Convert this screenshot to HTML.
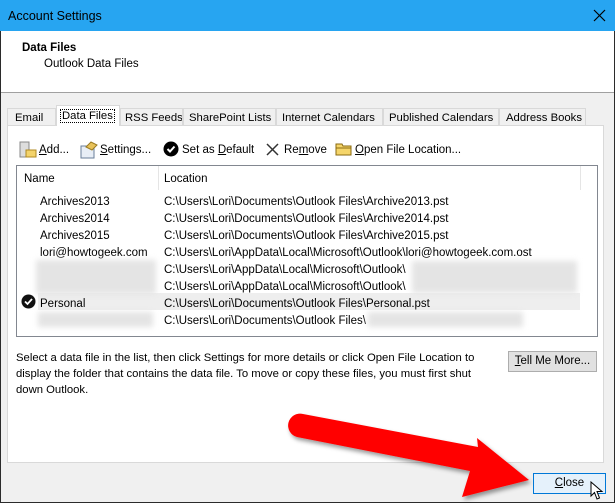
<!DOCTYPE html>
<html><head><style>
*{margin:0;padding:0;box-sizing:border-box}
body{width:615px;height:503px;overflow:hidden;font-family:"Liberation Sans",sans-serif;font-size:11.5px;color:#000;background:#f0f0f0;position:relative}
.a{position:absolute;white-space:nowrap}
u{text-decoration:underline}
.t{overflow:hidden;font-size:11.3px}
</style></head><body>
<div class="a" style="left:0;top:0;width:615px;height:503px;border:1px solid #2b2b2b;border-top:none"></div>
<div class="a" style="left:0;top:0;width:615px;height:31px;background:#27a5f1"></div>
<div class="a" style="left:8px;top:9px;font-size:12.5px">Account Settings</div>
<svg class="a" style="left:593px;top:9px" width="13" height="13"><path d="M1 1L12 12M12 1L1 12" stroke="#000" stroke-width="1.2"/></svg>
<div class="a" style="left:1px;top:31px;width:613px;height:62px;background:#fff;border-bottom:1px solid #a0a0a0"></div>
<div class="a" style="left:22px;top:42px;font-weight:bold">Data Files</div>
<div class="a" style="left:44px;top:58px">Outlook Data Files</div>
<div class="a" style="left:7px;top:125px;width:597px;height:338px;background:#fff;border:1px solid #d9d9d9"></div>
<div class="a t" style="left:7px;top:108px;width:49px;height:18px;border:1px solid #d9d9d9;background:#f0f0f0;padding:3px 0 0 7px">Email</div>
<div class="a t" style="left:56px;top:105px;width:64px;height:21px;border:1px solid #d9d9d9;border-bottom:none;background:#fff;padding:4px 0 0 4px"><span style="outline:1px dotted #000;padding:0 1px">Data Files</span></div>
<div class="a t" style="left:120px;top:108px;width:63px;height:18px;border:1px solid #d9d9d9;background:#f0f0f0;padding:3px 0 0 4px">RSS Feeds</div>
<div class="a t" style="left:183px;top:108px;width:93px;height:18px;border:1px solid #d9d9d9;background:#f0f0f0;padding:3px 0 0 5px">SharePoint Lists</div>
<div class="a t" style="left:276px;top:108px;width:107px;height:18px;border:1px solid #d9d9d9;background:#f0f0f0;padding:3px 0 0 5px">Internet Calendars</div>
<div class="a t" style="left:383px;top:108px;width:116px;height:18px;border:1px solid #d9d9d9;background:#f0f0f0;padding:3px 0 0 5px">Published Calendars</div>
<div class="a t" style="left:499px;top:108px;width:87px;height:18px;border:1px solid #d9d9d9;background:#f0f0f0;padding:3px 0 0 6px">Address Books</div>
<svg class="a" style="left:19px;top:141px" width="18" height="18"><rect x="1" y="1" width="9" height="15" fill="#ddd" stroke="#888"/><rect x="7" y="9" width="10" height="7" fill="#f3d36b" stroke="#b08a20"/></svg>
<div class="a" style="left:39px;top:144px"><u>A</u>dd...</div>
<svg class="a" style="left:80px;top:141px" width="18" height="18"><rect x="1" y="5" width="13" height="12" fill="#e8eef6" stroke="#6a7f9a"/><path d="M6 6L11 1L17 4L12 9Z" fill="#e8c25a" stroke="#9a7a20"/></svg>
<div class="a" style="left:100px;top:144px"><u>S</u>ettings...</div>
<svg class="a" style="left:163px;top:141px" width="16" height="16"><circle cx="8" cy="8" r="7.5" fill="#000"/><path d="M4.5 8L7 10.5L11.5 5.5" stroke="#fff" stroke-width="2" fill="none"/></svg>
<div class="a" style="left:182px;top:144px">Set as <u>D</u>efault</div>
<svg class="a" style="left:266px;top:143px" width="13" height="13"><path d="M1 1L12 12M12 1L1 12" stroke="#333" stroke-width="1.5"/></svg>
<div class="a" style="left:284px;top:144px">Re<u>m</u>ove</div>
<svg class="a" style="left:335px;top:142px" width="18" height="14"><path d="M1 2H7L8 4H16V13H1Z" fill="#f5d56a" stroke="#8a6a10"/><path d="M1 6H16" stroke="#8a6a10"/></svg>
<div class="a" style="left:355px;top:144px"><u>O</u>pen File Location...</div>
<div class="a" style="left:16px;top:165px;width:582px;height:172px;border:1px solid #828790;background:#fff"></div>
<div class="a" style="left:158px;top:166px;width:1px;height:24px;background:#e5e5e5"></div>
<div class="a" style="left:580px;top:166px;width:1px;height:24px;background:#e5e5e5"></div>
<div class="a" style="left:24px;top:173px">Name</div>
<div class="a" style="left:164px;top:173px">Location</div>
<div class="a" style="left:38px;top:293px;width:542px;height:17px;background:#eeeeee"></div>
<svg class="a" style="left:21px;top:294px" width="15" height="15"><circle cx="7.5" cy="7.5" r="7" fill="#111"/><path d="M4 7.5L6.5 10L11 5" stroke="#fff" stroke-width="1.8" fill="none"/></svg>
<div class="a" style="left:40px;top:194px;line-height:17px">Archives2013<br>Archives2014<br>Archives2015<br>lori@howtogeek.com<br>&nbsp;<br>&nbsp;<br>Personal</div>
<div class="a" style="left:164px;top:194px;line-height:17px;font-size:11.5px">C:\Users\Lori\Documents\Outlook Files\Archive2013.pst<br>C:\Users\Lori\Documents\Outlook Files\Archive2014.pst<br>C:\Users\Lori\Documents\Outlook Files\Archive2015.pst<br>C:\Users\Lori\AppData\Local\Microsoft\Outlook\lori@howtogeek.com.ost<br>C:\Users\Lori\AppData\Local\Microsoft\Outlook\<br>C:\Users\Lori\AppData\Local\Microsoft\Outlook\<br>C:\Users\Lori\Documents\Outlook Files\Personal.pst<br>C:\Users\Lori\Documents\Outlook Files\</div>
<div class="a" style="left:36px;top:260px;width:120px;height:34px;background:#e4e4e4;filter:blur(3px)"></div>
<div class="a" style="left:38px;top:312px;width:115px;height:15px;background:#e4e4e4;filter:blur(3px)"></div>
<div class="a" style="left:412px;top:261px;width:165px;height:32px;background:#e4e4e4;filter:blur(3px)"></div>
<div class="a" style="left:368px;top:312px;width:155px;height:15px;background:#e4e4e4;filter:blur(3px)"></div>
<div class="a" style="left:16px;top:350px;line-height:16px;font-size:11.3px">Select a data file in the list, then click Settings for more details or click Open File Location to<br>display the folder that contains the data file. To move or copy these files, you must first shut<br>down Outlook.</div>
<div class="a" style="left:508px;top:351px;width:89px;height:21px;border:1px solid #adadad;background:#e1e1e1;text-align:center;line-height:19px"><u>T</u>ell Me More...</div>
<div class="a" style="left:533px;top:473px;width:73px;height:21px;border:1px solid #0078d7;background:#e5f1fb;text-align:center;line-height:19px"><u>C</u>lose</div>
<svg class="a" style="left:0;top:0" width="615" height="503"><defs><filter id="s"><feDropShadow dx="2" dy="3" stdDeviation="2" flood-opacity="0.4"/></filter></defs>
<path d="M303 414L478 447L477 438L529 480L462 497L470 471L297 437A11 11 0 0 1 303 414Z" fill="#f00" filter="url(#s)"/></svg>
<svg class="a" style="left:590px;top:481px" width="14" height="20"><path d="M1 1V15L4.5 11.5L7 18L9.5 17L7 10.5H12Z" fill="#fff" stroke="#000"/></svg>
</body></html>
